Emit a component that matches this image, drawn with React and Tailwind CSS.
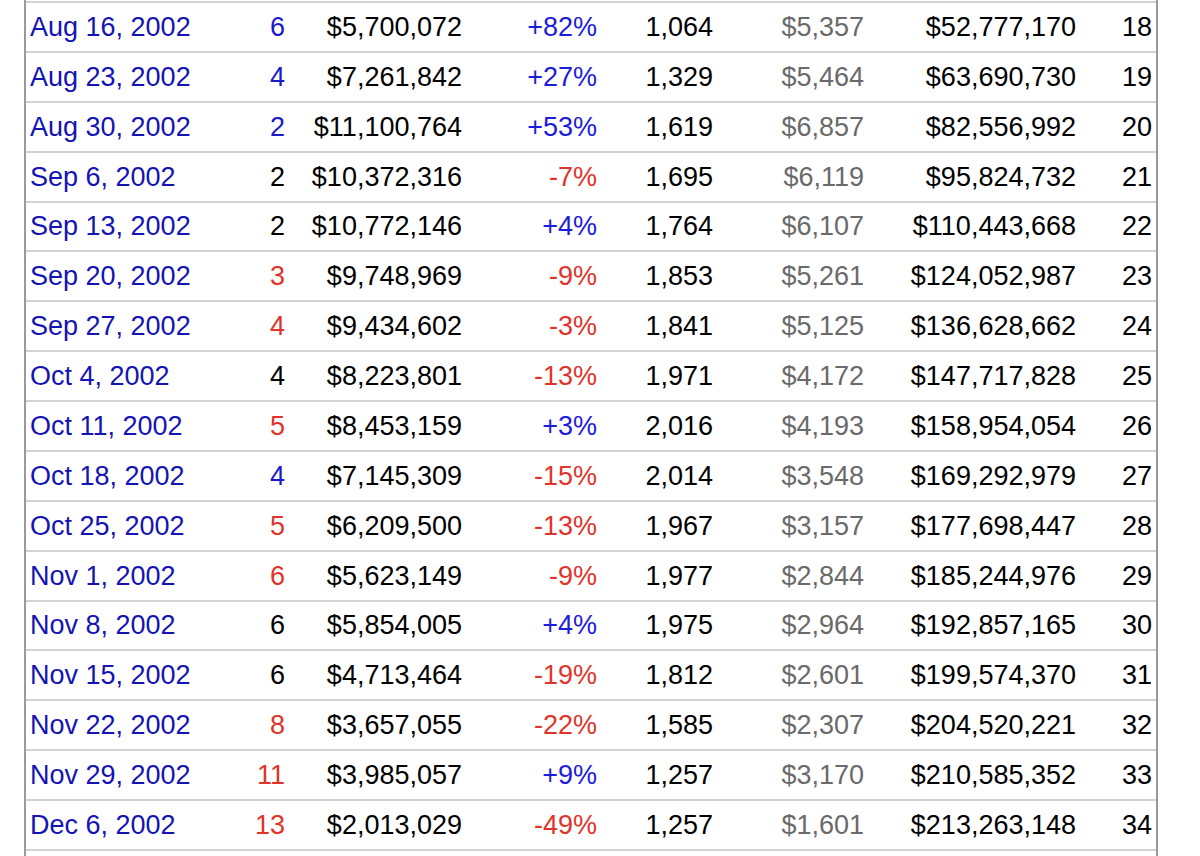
import React from "react";

// weekly box office rows: rank colour = movement vs previous week
const rows = [
  ["Aug 16, 2002", "6", "up", "$5,700,072", "+82%", "1,064", "$5,357", "$52,777,170", "18"],
  ["Aug 23, 2002", "4", "up", "$7,261,842", "+27%", "1,329", "$5,464", "$63,690,730", "19"],
  ["Aug 30, 2002", "2", "up", "$11,100,764", "+53%", "1,619", "$6,857", "$82,556,992", "20"],
  ["Sep 6, 2002", "2", "same", "$10,372,316", "-7%", "1,695", "$6,119", "$95,824,732", "21"],
  ["Sep 13, 2002", "2", "same", "$10,772,146", "+4%", "1,764", "$6,107", "$110,443,668", "22"],
  ["Sep 20, 2002", "3", "down", "$9,748,969", "-9%", "1,853", "$5,261", "$124,052,987", "23"],
  ["Sep 27, 2002", "4", "down", "$9,434,602", "-3%", "1,841", "$5,125", "$136,628,662", "24"],
  ["Oct 4, 2002", "4", "same", "$8,223,801", "-13%", "1,971", "$4,172", "$147,717,828", "25"],
  ["Oct 11, 2002", "5", "down", "$8,453,159", "+3%", "2,016", "$4,193", "$158,954,054", "26"],
  ["Oct 18, 2002", "4", "up", "$7,145,309", "-15%", "2,014", "$3,548", "$169,292,979", "27"],
  ["Oct 25, 2002", "5", "down", "$6,209,500", "-13%", "1,967", "$3,157", "$177,698,447", "28"],
  ["Nov 1, 2002", "6", "down", "$5,623,149", "-9%", "1,977", "$2,844", "$185,244,976", "29"],
  ["Nov 8, 2002", "6", "same", "$5,854,005", "+4%", "1,975", "$2,964", "$192,857,165", "30"],
  ["Nov 15, 2002", "6", "same", "$4,713,464", "-19%", "1,812", "$2,601", "$199,574,370", "31"],
  ["Nov 22, 2002", "8", "down", "$3,657,055", "-22%", "1,585", "$2,307", "$204,520,221", "32"],
  ["Nov 29, 2002", "11", "down", "$3,985,057", "+9%", "1,257", "$3,170", "$210,585,352", "33"],
  ["Dec 6, 2002", "13", "down", "$2,013,029", "-49%", "1,257", "$1,601", "$213,263,148", "34"],
];

const rankColor = {
  up: "text-[#1a1acc]",
  same: "text-black",
  down: "text-[#e0342a]",
};

const App = () => {
  return (
    <div className="w-[1200px] h-[856px] overflow-hidden bg-white font-['Liberation_Sans',Arial,sans-serif]">
      <div className="ml-[24px] w-[1134px] h-[856px] border-x-2 border-[#9a9a9a] pt-[1px]">
        {rows.map((r, i) => {
          const [date, rank, move, gross, change, theaters, avg, total, week] = r;
          const isUp = change.startsWith("+");
          return (
            <div
              key={i}
              className="grid grid-cols-[174px_85px_177px_135px_116px_151px_213px_75px] h-[49.88px] items-center border-t-2 border-[#d2d2d2] text-[27px] leading-none pt-[1px]"
            >
              <span className="pl-[4px] text-[#1414b4] whitespace-nowrap">{date}</span>
              <span className={`text-right ${rankColor[move]}`}>{rank}</span>
              <span className="text-right text-black">{gross}</span>
              <span className={`text-right ${isUp ? "text-[#1c1cdc]" : "text-[#e0342a]"}`}>
                {change}
              </span>
              <span className="text-right text-black">{theaters}</span>
              <span className="text-right text-[#6a6a6a]">{avg}</span>
              <span className="text-right text-black pr-[1px]">{total}</span>
              <span className="text-right text-black">{week}</span>
            </div>
          );
        })}
        <div className="border-t-2 border-[#d2d2d2]" />
      </div>
    </div>
  );
};

export default App;
